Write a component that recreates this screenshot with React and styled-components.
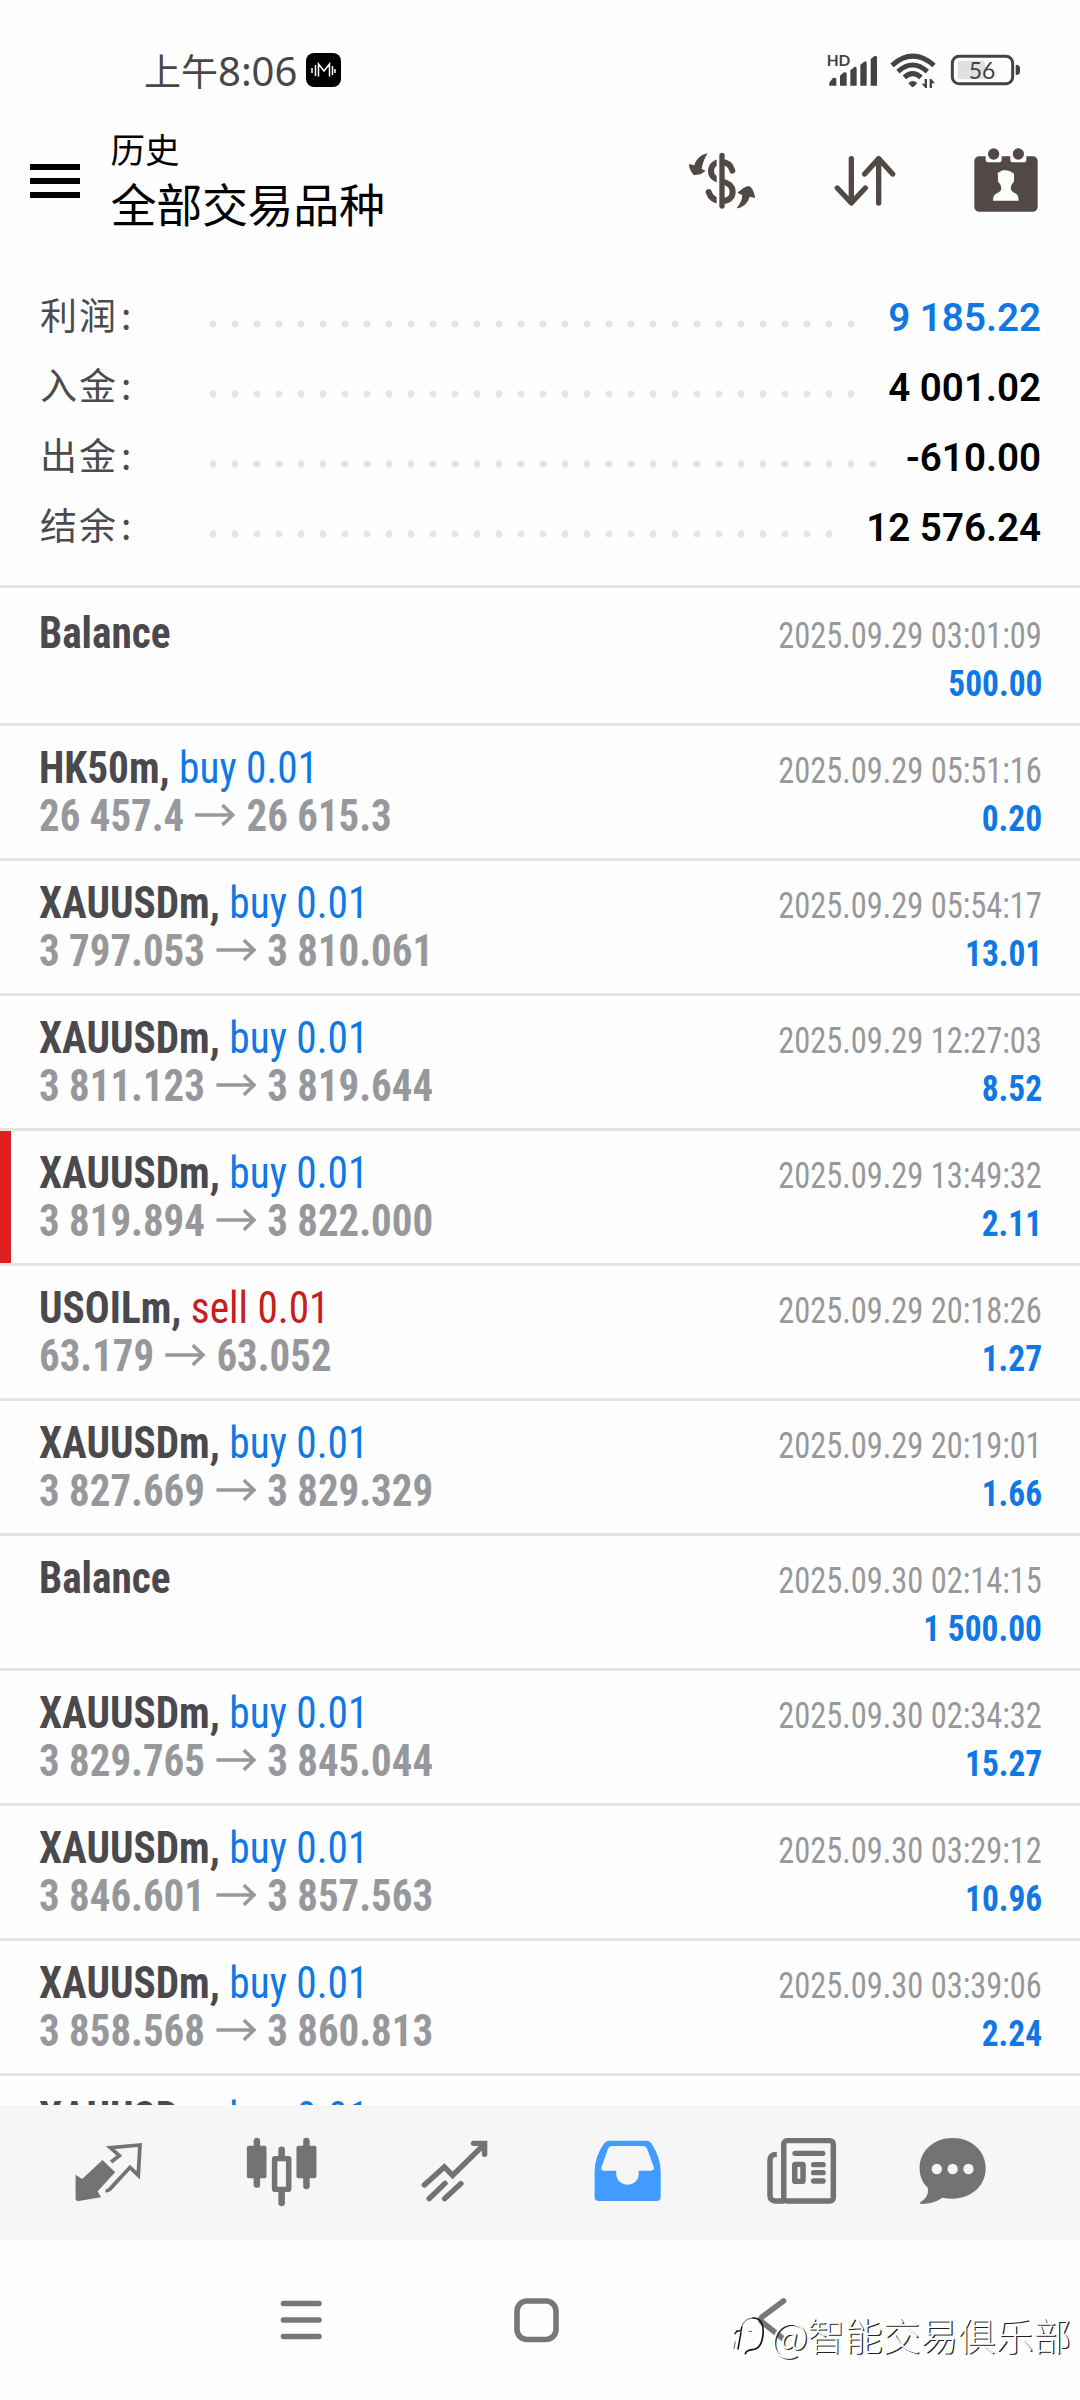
import React from "react";
import styled, { createGlobalStyle } from "styled-components";

const cjk = `"Noto Sans CJK SC", sans-serif`;
const condensed = `"Roboto Condensed", Roboto, ${cjk}`;

const GlobalStyle = createGlobalStyle`
  * { box-sizing: border-box; }
  body { margin: 0; background: #fefefe; }
  svg { display: block; flex: none; overflow: visible; }
`;

const Screen = styled.div`
  position: relative;
  display: flex;
  flex-direction: column;
  width: 1080px;
  height: 2400px;
  overflow: hidden;
  background: #fefefe;
  font-family: Roboto, ${cjk};
`;

const StatusBar = styled.div`
  display: flex;
  align-items: flex-start;
  justify-content: space-between;
  height: 106px;
  padding: 40px 50px 0 144px;
`;
const Clock = styled.div`
  display: flex;
  align-items: center;
  gap: 9px;
  height: 60px;
  color: #474747;
`;
const Time = styled.div`
  font: 400 40px/60px "Noto Sans", ${cjk};
  white-space: nowrap;
`;
const Meridiem = styled.span`
  font: 400 37px/60px ${cjk};
`;
const AppBadge = styled.svg`
  width: 35px;
  height: 34px;
`;

const Header = styled.header`
  display: flex;
  align-items: flex-start;
  height: 175px;
  padding-left: 30px;
`;
const MenuButton = styled.div`
  display: flex;
  flex-direction: column;
  gap: 8px;
  width: 50px;
  margin: 58px 30.5px 0 0;
`;
const MenuBar = styled.div`
  height: 6px;
  background: #000;
`;
const Titles = styled.div`
  flex: 1;
  padding-top: 17px;
  color: #000;
  font-family: ${cjk};
`;
const Title = styled.div`
  font-size: 34.5px;
  line-height: 50px;
`;
const Subtitle = styled.div`
  font-size: 46px;
  line-height: 58px;
  letter-spacing: -0.3px;
`;
const Actions = styled.div`
  display: flex;
  padding: 44px 41px 0 0;
`;
const ActionIcon = styled.svg`
  width: ${(p) => p.$w}px;
  height: 65px;
  margin-left: ${(p) => p.$gap || 0}px;
`;

const Summary = styled.section`
  height: 307px;
  padding: 0 39px 0 40px;
  border-bottom: 3px solid #e4e4e4;
`;
const SummaryRow = styled.div`
  display: flex;
  height: 70px;
  line-height: 70px;
`;
const SummaryLabel = styled.div`
  display: flex;
  width: 162px;
  font-family: ${cjk};
  font-size: 37px;
  letter-spacing: 2px;
  line-height: 66px;
  color: #4b4a4e;
`;
const Colon = styled.span`
  margin-left: 3px;
`;
const Leader = styled.div`
  display: flex;
  flex: 1;
  flex-wrap: wrap;
  height: 8px;
  margin: 39px 11px 0 0;
  overflow: hidden;
`;
const Dot = styled.span`
  width: 22px;
  height: 8px;
  background: radial-gradient(circle at center, #e4e4e4 3px, transparent 4px);
`;
const SummaryValue = styled.div`
  padding-top: 2px;
  font-size: 38.600px;
  font-weight: 600;
  color: ${(p) => (p.$accent ? "#0f78e4" : "#000")};
  white-space: nowrap;
`;

const DealList = styled.section`
  flex: none;
  height: 1517px;
  overflow: hidden;
`;
const Deal = styled.div`
  height: ${(p) => (p.$first ? 138 : 135)}px;
  padding: ${(p) => (p.$first ? 21 : 18)}px 38px 0 39px;
  border-bottom: 3px solid #e4e4e4;
  font-family: ${condensed};
`;
const MarkedDeal = styled(Deal)`
  display: grid;
  grid-template-columns: 11px 1fr;
  column-gap: 28px;
  padding: 0 38px 0 0;
`;
const Marker = styled.div`
  height: 132px;
  background: #e01f1f;
`;
const DealBody = styled.div`
  padding-top: 18px;
`;
const Line = styled.div`
  display: flex;
  align-items: baseline;
  justify-content: space-between;
  height: 48px;
  line-height: 48px;
  white-space: nowrap;

  &::before {
    content: "\\200b";
    width: 0;
    font-size: 44px;
  }
`;
const Symbol = styled.div`
  margin-right: auto;
  font-size: 44px;
  font-weight: 700;
  color: #4a494e;
  transform: scaleX(0.938);
  transform-origin: left;
`;
const Side = styled.span`
  font-weight: 400;
  color: ${(p) => (p.$sell ? "#c4201f" : "#0f78e4")};
`;
const Prices = styled.div`
  display: flex;
  gap: 12px;
  font-size: 44px;
  font-weight: 700;
  color: #97989b;
  transform: scaleX(0.929);
  transform-origin: left;
`;
const Arrow = styled.svg`
  width: 43px;
  height: 22px;
  margin-top: 12px;
`;
const Stamp = styled.div`
  font-size: 36px;
  color: #97989b;
  transform: scaleX(0.9);
  transform-origin: right;
`;
const Amount = styled.div`
  margin-left: auto;
  font-size: 36px;
  font-weight: 700;
  color: #0f78e4;
  transform: scaleX(0.928);
  transform-origin: right;
`;

const TabBar = styled.nav`
  display: grid;
  flex: none;
  grid-template-columns: repeat(5, 173.3px) 130px;
  justify-items: center;
  height: 135px;
  padding-left: 21.5px;
  background: #f6f6f6;
`;
const TabIcon = styled.svg`
  width: 103.3px;
  height: 135px;
`;

const NavBar = styled.div`
  display: flex;
  flex: none;
  align-items: center;
  height: 160px;
  padding-left: 280px;
`;
const NavIcon = styled.svg`
  width: 46px;
  height: 46px;
  margin-right: ${(p) => p.$gap || 0}px;
`;

const Watermark = styled.div`
  position: absolute;
  right: 9px;
  bottom: 36px;
  display: flex;
  align-items: center;
  color: #fff;
  font: 300 37.700px/60px ${cjk};
  text-shadow: 1.2px 1.2px 0.6px #222;
  white-space: nowrap;
`;
const At = styled.span`
  margin-right: -1px;
  font-size: 41px;
`;

const summary = [
  ["利润", "9 185.22", true],
  ["入金", "4 001.02"],
  ["出金", "-610.00"],
  ["结余", "12 576.24"],
];

const deals = [
  { symbol: "Balance", time: "2025.09.29 03:01:09", amount: "500.00" },
  { symbol: "HK50m", side: "buy", from: "26 457.4", to: "26 615.3", time: "2025.09.29 05:51:16", amount: "0.20" },
  { symbol: "XAUUSDm", side: "buy", from: "3 797.053", to: "3 810.061", time: "2025.09.29 05:54:17", amount: "13.01" },
  { symbol: "XAUUSDm", side: "buy", from: "3 811.123", to: "3 819.644", time: "2025.09.29 12:27:03", amount: "8.52" },
  { symbol: "XAUUSDm", side: "buy", from: "3 819.894", to: "3 822.000", time: "2025.09.29 13:49:32", amount: "2.11", marked: true },
  { symbol: "USOILm", side: "sell", from: "63.179", to: "63.052", time: "2025.09.29 20:18:26", amount: "1.27" },
  { symbol: "XAUUSDm", side: "buy", from: "3 827.669", to: "3 829.329", time: "2025.09.29 20:19:01", amount: "1.66" },
  { symbol: "Balance", time: "2025.09.30 02:14:15", amount: "1 500.00" },
  { symbol: "XAUUSDm", side: "buy", from: "3 829.765", to: "3 845.044", time: "2025.09.30 02:34:32", amount: "15.27" },
  { symbol: "XAUUSDm", side: "buy", from: "3 846.601", to: "3 857.563", time: "2025.09.30 03:29:12", amount: "10.96" },
  { symbol: "XAUUSDm", side: "buy", from: "3 858.568", to: "3 860.813", time: "2025.09.30 03:39:06", amount: "2.24" },
  { symbol: "XAUUSDm", side: "buy" },
];

const DealLines = ({ d }) => (
  <>
    <Line>
      <Symbol>
        {d.symbol}
        {d.side && <>, <Side $sell={d.side === "sell"}>{d.side} 0.01</Side></>}
      </Symbol>
      {d.time && <Stamp>{d.time}</Stamp>}
    </Line>
    <Line>
      {d.from && (
        <Prices>
          <span>{d.from}</span>
          <Arrow viewBox="0 0 43 22" fill="none" stroke="#97989b" strokeWidth="3.6">
            <path d="M0 11H41M29.500 1.200L40.500 11L29.500 20.800" />
          </Arrow>
          <span>{d.to}</span>
        </Prices>
      )}
      {d.amount && <Amount>{d.amount}</Amount>}
    </Line>
  </>
);

const StatusIcons = () => (
  <svg width="210" height="60" viewBox="0 0 630 180" fill="#434343">
    <text x="20" y="78" fontFamily="Lato" fontWeight="700" fontSize="47" textLength="71" lengthAdjust="spacingAndGlyphs">HD</text>
    <path d="M28 137V128L38 115Q49 111 49 118V137ZM60 137V107L72 97Q80 95 80 101V137ZM91 137V91L103 81Q110 79 110 86V137ZM121 137V74L133 65Q140 62 140 69V137ZM152 137V57L164 48Q171 45 171 52V137Z" />
    <g fill="none" stroke="#434343" strokeWidth="15">
      <path d="M216 76Q278 21 342 76" />
      <path d="M234 95Q278 55 322 95" />
      <path d="M253 112Q278 90 303 112" />
    </g>
    <path d="M265 130Q278 116 292 130L281 140Q278 142 275 140Z" />
    <path d="M314 117H321V144H316L305 131H314ZM329 144H336V130H345L334 117H329Z" />
    <rect x="397" y="49" width="181" height="82" rx="20" fill="none" stroke="#434343" strokeWidth="9" />
    <rect x="413" y="62" width="82" height="56" rx="8" fill="#e0e0e0" />
    <text x="446" y="116" fontFamily="Lato" fontSize="70" textLength="80" lengthAdjust="spacingAndGlyphs">56</text>
    <path d="M587 77Q587 74 591 74Q600 76 600 84V96Q600 103 591 105Q587 105 587 102Z" />
  </svg>
);

export default function App() {
  return (
    <Screen>
      <GlobalStyle />
      <StatusBar>
        <Clock>
          <Time><Meridiem>上午</Meridiem>8:06</Time>
          <AppBadge viewBox="0 0 35 34">
            <rect width="35" height="34" rx="8" fill="#000" />
            <path d="M12.500 23.500V11L18 18L23.500 11V23.500M9.500 12V23M6 15V20M26.500 13V22M29 16V20" fill="none" stroke="#fff" strokeWidth="1.5" />
          </AppBadge>
        </Clock>
        <StatusIcons />
      </StatusBar>

      <Header>
        <MenuButton><MenuBar /><MenuBar /><MenuBar /></MenuButton>
        <Titles>
          <Title>历史</Title>
          <Subtitle>全部交易品种</Subtitle>
        </Titles>
        <Actions>
          <ActionIcon $w={68} viewBox="24 30 204 195">
            <path d="M157 92C152 74 140 66 124 66C104 66 93 78 93 93C93 112 108 118 124 123C144 129 158 136 158 156C158 174 144 183 124 183C106 183 92 175 86 156" fill="none" stroke="#524946" strokeWidth="18" strokeLinecap="round" />
            <path d="M110 40H120V210H110Z" fill="#fefefe" />
            <path d="M126 46V198" stroke="#524946" strokeWidth="16" strokeLinecap="round" />
            <path d="M83 40C62 44 48 58 43 76L27 72C27 85 33 96 42 106L62 103L77 92L65 87C68 68 74 54 83 40ZM170 205C180 192 186 180 187 166L172 158L190 144C200 138 210 138 212 141C220 150 225 165 225 174L209 170C203 190 190 202 170 205Z" fill="#524946" />
          </ActionIcon>
          <ActionIcon $w={66} $gap={76} viewBox="576 360 198 195" fill="none" stroke="#524946" strokeWidth="16" strokeLinecap="round" strokeLinejoin="round">
            <path d="M634 386V518M592 474L634 519L676 474M716 519V386M674 432L716 386L758 432" />
          </ActionIcon>
          <ActionIcon $w={66} $gap={75} viewBox="1001 359 198 195">
            <rect x="1005" y="378" width="190" height="166" rx="14" fill="#524946" />
            <path d="M1039 360H1087V388Q1087 396 1078 396H1048Q1039 396 1039 388ZM1113 360H1161V388Q1161 396 1152 396H1122Q1113 396 1113 388Z" fill="#fefefe" />
            <circle cx="1063" cy="371" r="17" fill="#524946" />
            <circle cx="1137" cy="371" r="17" fill="#524946" />
            <path d="M1075 428Q1083 424 1090 420Q1110 418 1124 430V442Q1126 452 1121 458Q1115 462 1114 476Q1118 486 1130 490Q1138 494 1138 511H1061Q1061 494 1070 490Q1083 486 1086 476Q1085 462 1079 458Q1074 452 1076 442Z" fill="#fefefe" />
          </ActionIcon>
        </Actions>
      </Header>

      <Summary>
        {summary.map(([label, value, accent]) => (
          <SummaryRow key={label}>
            <SummaryLabel>{label}<Colon>:</Colon></SummaryLabel>
            <Leader>{Array.from({ length: 40 }, (_, i) => <Dot key={i} />)}</Leader>
            <SummaryValue $accent={accent}>{value}</SummaryValue>
          </SummaryRow>
        ))}
      </Summary>

      <DealList>
        {deals.map((d, i) =>
          d.marked ? (
            <MarkedDeal key={i}>
              <Marker />
              <DealBody><DealLines d={d} /></DealBody>
            </MarkedDeal>
          ) : (
            <Deal key={i} $first={i === 0}><DealLines d={d} /></Deal>
          )
        )}
      </DealList>

      <TabBar>
        <TabIcon viewBox="165 75 300 405" preserveAspectRatio="none">
          <path d="M297 240L334 277L283 334L293 352L228 363Q219 364 219 355V284L238 297Z" fill="#737373" />
          <path d="M322 246L346 227L320 203L406 195L401 286L377 262L318 328Q312 333 306 332" fill="none" stroke="#737373" strokeWidth="11" />
        </TabIcon>
        <TabIcon viewBox="666 75 300 405" preserveAspectRatio="none" fill="#737373">
          <rect x="715" y="197" width="57" height="98" rx="6" />
          <rect x="859" y="197" width="58" height="98" rx="6" />
          <path d="M744 183V314M888 183V318M816 209V232M816 334V369" stroke="#737373" strokeWidth="19" strokeLinecap="round" />
          <rect x="795.500" y="236" width="41" height="92" rx="2" fill="#f6f6f6" stroke="#737373" strokeWidth="16" />
        </TabIcon>
        <TabIcon viewBox="1169 75 300 405" preserveAspectRatio="none" fill="none" stroke="#737373" strokeWidth="16" strokeLinecap="round">
          <path d="M1231 315L1289 261L1313 286L1402 196M1374 190H1406V223M1245 356L1291 310M1290 356L1337 311" />
        </TabIcon>
        <TabIcon viewBox="104 75 300 405" preserveAspectRatio="none">
          <path fillRule="evenodd" fill="#429cff" d="M200 182H309Q318 182 323 190Q350 235 350 275V350Q350 363 338 363H170Q158 363 158 350V275Q158 230 186 190Q191 182 200 182ZM208 198Q200 198 197 206L178 262Q176 272 184 272H221V285C223 302 237 314 254 314C271 314 285 302 286 285V272H323Q332 272 330 262L311 208Q307 198 298 198Z" />
        </TabIcon>
        <TabIcon viewBox="608 75 300 405" preserveAspectRatio="none" fill="none" stroke="#737373" strokeWidth="16">
          <rect x="706" y="182" width="144" height="181" rx="10" />
          <path d="M686 223C672 223 666 228 666 242V345Q666 363 682 363H708" />
          <path d="M739 220H819M793 254H820M793 278H820M793 303H820" strokeLinecap="round" />
          <rect x="738" y="253" width="24" height="51" rx="2" />
        </TabIcon>
        <TabIcon viewBox="1049 75 300 405" preserveAspectRatio="none">
          <path d="M1199 174C1254 174 1295 213 1295 265C1295 317 1254 356 1199 356C1188 356 1178 355 1169 353C1155 364 1134 371 1108 372Q1100 371 1107 365C1122 356 1129 344 1127 324C1111 308 1103 288 1103 265C1103 213 1144 174 1199 174Z" fill="#737373" />
          <g fill="#f6f6f6">
            <ellipse cx="1153" cy="267" rx="15" ry="16" />
            <ellipse cx="1199" cy="267" rx="15" ry="16" />
            <ellipse cx="1245" cy="267" rx="15" ry="16" />
          </g>
        </TabIcon>
      </TabBar>

      <NavBar>
        <NavIcon viewBox="0 0 46 46" $gap={187} stroke="#777" strokeWidth="5.6" strokeLinecap="round">
          <path d="M3.500 6.500H39M3.500 23H39M3.500 39.500H39" />
        </NavIcon>
        <NavIcon viewBox="0 0 46 46" $gap={197} fill="none" stroke="#777" strokeWidth="5.6">
          <rect x="4" y="4" width="39" height="38.500" rx="10" />
        </NavIcon>
        <NavIcon viewBox="0 0 46 46" fill="none" stroke="#777" strokeWidth="5.600" strokeLinecap="round" strokeLinejoin="round">
          <path d="M27.500 4L6 20Q3.500 22.500 6 25L27.500 42" />
        </NavIcon>
      </NavBar>

      <Watermark>
        <svg width="38" height="60" viewBox="24 66 114 180" fill="none" stroke="#111" strokeLinecap="round">
          <path d="M84 108C108 108 117 128 114 158C111 188 98 202 82 203C70 204 63 209 61 215" strokeWidth="5" />
          <path d="M48 152L39 201M30 155L36 147H48L50 136" strokeWidth="4.500" />
          <path d="M50 136C54 118 66 110 82 108M72 148H80M31 180L27 199" strokeWidth="2" />
        </svg>
        <At>@</At>智能交易俱乐部
      </Watermark>
    </Screen>
  );
}
